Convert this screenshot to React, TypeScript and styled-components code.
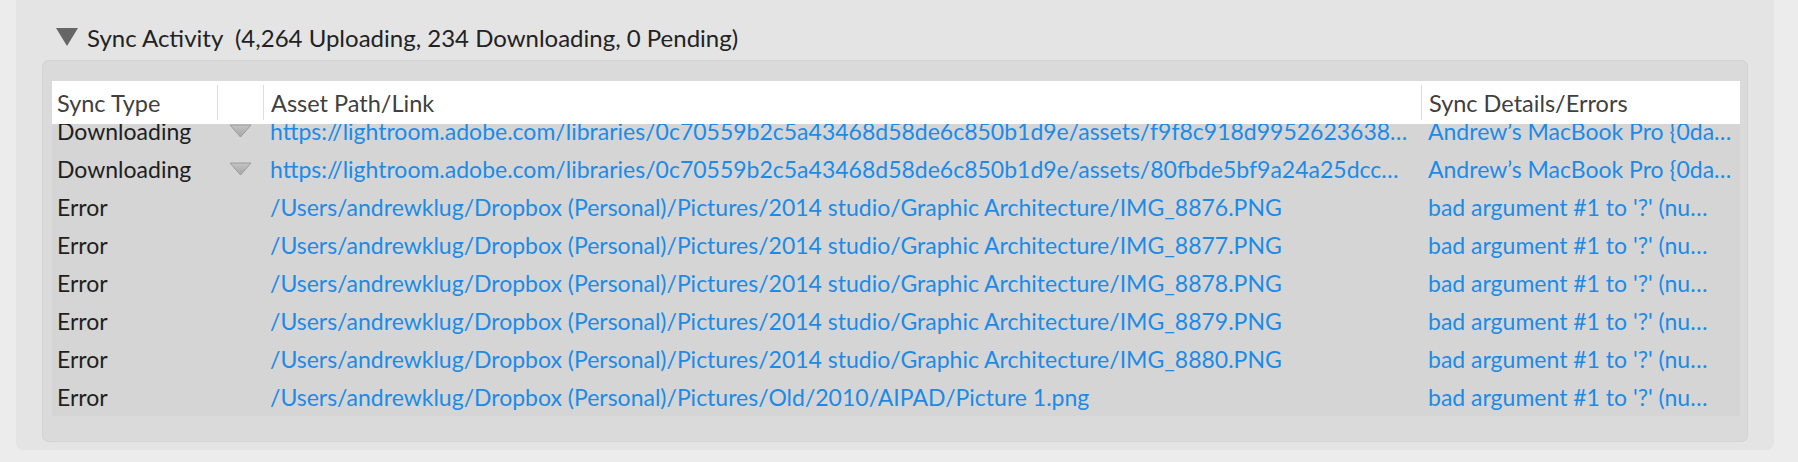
import styled, { createGlobalStyle } from "styled-components"

const Global = createGlobalStyle`
html, body {
  margin: 0;
  padding: 0;
  background: #ececec;
}
body {
  font-family: Lato, "Noto Sans", sans-serif;
  -webkit-font-smoothing: antialiased;
}
`

const Page = styled.div`
height: 462px;
overflow: hidden;
`

const Panel = styled.section`
margin: 0 24px 0 16px;
height: 450px;
box-sizing: border-box;
padding: 0 26px 8px 26px;
background: #e4e4e4;
border-radius: 0 0 7px 7px;
display: flex;
flex-direction: column;
`

const Heading = styled.div`
height: 60px;
box-sizing: border-box;
padding: 14px 0 0 14px;
display: flex;
align-items: center;
gap: 9px;
font-size: 24px;
color: #222;
white-space: pre;
`

const Box = styled.div`
flex: 1;
background: #dadada;
border-radius: 7px;
box-shadow: inset 0 0 0 1px #d3d3d3;
padding: 21px 8px 0 10px;
display: flex;
flex-direction: column;
`

const columns = "165px 46px 1158px 1fr"

const HeaderRow = styled.div`
height: 43px;
display: grid;
grid-template-columns: ${columns};
background: #fff;
flex-shrink: 0;
`

const HeaderCell = styled.div<{ $divider?: boolean }>`
margin: 4px 0;
display: flex;
align-items: center;
padding-left: ${p => (p.$divider ? "7px" : "5px")};
border-left: ${p => (p.$divider ? "1px solid #dcdcdc" : "none")};
font-size: 23.5px;
color: #404040;
white-space: nowrap;
`

const Body = styled.div`
height: 292px;
overflow: hidden;
display: flex;
flex-direction: column;
justify-content: flex-end;
background: #d5d5d5;
`

const Row = styled.div`
height: 38px;
flex-shrink: 0;
display: grid;
grid-template-columns: ${columns};
align-items: center;
font-size: 23px;
`

const Cell = styled.div<{ $link?: boolean; $pad?: number; $right?: number }>`
padding-left: ${p => p.$pad ?? 7}px;
padding-right: ${p => p.$right ?? 0}px;
color: ${p => (p.$link ? "#1b8be8" : "#1e1e1e")};
white-space: nowrap;
overflow: hidden;
text-overflow: ellipsis;
`

const IconCell = styled.div`
display: flex;
justify-content: center;
padding-left: 1px;
`

function Disclosure() {
  return (
    <svg width="22" height="18" viewBox="0 0 22 18">
      <path d="M0 0 H22 L11 18 Z" fill="#666" />
    </svg>
  )
}

function RowArrow() {
  return (
    <svg width="23" height="14" viewBox="0 0 23 14">
      <defs>
        <linearGradient id="arrowFill" x1="0" y1="0" x2="0" y2="1">
          <stop offset="0" stopColor="#c4c4c4" />
          <stop offset="1" stopColor="#a5a5a5" />
        </linearGradient>
      </defs>
      <path d="M1 1 H22 L11.5 13 Z" fill="url(#arrowFill)" stroke="#9c9c9c" strokeWidth="1" strokeLinejoin="round" />
    </svg>
  )
}

type Item = { type: string; arrow?: boolean; path: string; details: string }

const errorText = "bad argument #1 to '?' (nu…"
const base = "/Users/andrewklug/Dropbox (Personal)/Pictures/"

const items: Item[] = [
  {
    type: "Downloading",
    arrow: true,
    path: "https://lightroom.adobe.com/libraries/0c70559b2c5a43468d58de6c850b1d9e/assets/f9f8c918d9952623638…",
    details: "Andrew’s MacBook Pro {0da…",
  },
  {
    type: "Downloading",
    arrow: true,
    path: "https://lightroom.adobe.com/libraries/0c70559b2c5a43468d58de6c850b1d9e/assets/80fbde5bf9a24a25dcc…",
    details: "Andrew’s MacBook Pro {0da…",
  },
  { type: "Error", path: base + "2014 studio/Graphic Architecture/IMG_8876.PNG", details: errorText },
  { type: "Error", path: base + "2014 studio/Graphic Architecture/IMG_8877.PNG", details: errorText },
  { type: "Error", path: base + "2014 studio/Graphic Architecture/IMG_8878.PNG", details: errorText },
  { type: "Error", path: base + "2014 studio/Graphic Architecture/IMG_8879.PNG", details: errorText },
  { type: "Error", path: base + "2014 studio/Graphic Architecture/IMG_8880.PNG", details: errorText },
  { type: "Error", path: base + "Old/2010/AIPAD/Picture 1.png", details: errorText },
]

export default function App() {
  return (
    <Page>
      <Global />
      <Panel>
        <Heading>
          <Disclosure />
          <span>Sync Activity  (4,264 Uploading, 234 Downloading, 0 Pending)</span>
        </Heading>
        <Box>
          <HeaderRow>
            <HeaderCell>Sync Type</HeaderCell>
            <HeaderCell $divider />
            <HeaderCell $divider>Asset Path/Link</HeaderCell>
            <HeaderCell $divider>Sync Details/Errors</HeaderCell>
          </HeaderRow>
          <Body>
            {items.map((item, i) => (
              <Row key={i}>
                <Cell $pad={5}>{item.type}</Cell>
                <IconCell>{item.arrow && <RowArrow />}</IconCell>
                <Cell $link $right={8}>{item.path}</Cell>
                <Cell $link $right={3}>{item.details}</Cell>
              </Row>
            ))}
          </Body>
        </Box>
      </Panel>
    </Page>
  )
}
